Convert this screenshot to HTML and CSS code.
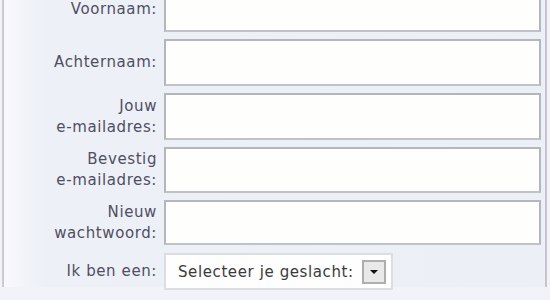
FILE: index.html
```html
<!DOCTYPE html>
<html>
    <head>
        <title>Registreren</title>
        <link rel="stylesheet" href="styles.css">
    </head>
    <body>
        <div class="frame">
            <form class="signup">
                <label class="lbl" for="voornaam">Voornaam:</label>
                <input class="field" id="voornaam" type="text">

                <label class="lbl" for="achternaam">Achternaam:</label>
                <input class="field" id="achternaam" type="text">

                <label class="lbl" for="email">Jouw<br>e-mailadres:</label>
                <input class="field" id="email" type="text">

                <label class="lbl" for="email2">Bevestig<br>e-mailadres:</label>
                <input class="field" id="email2" type="text">

                <label class="lbl" for="pass">Nieuw<br>wachtwoord:</label>
                <input class="field" id="pass" type="password">

                <label class="lbl" for="sex">Ik ben een:</label>
                <div class="select_box" id="sex">
                    <span class="select_text">Selecteer je geslacht:</span>
                    <span class="select_btn"><span class="arrow"></span></span>
                </div>
            </form>
        </div>
    </body>
</html>
```

FILE: styles.css
```css
html, body {
	margin: 0;
	height: 100%;
}
body {
	background: #f2f3f9;
	font-family: "DejaVu Sans", Verdana, sans-serif;
	overflow: hidden;
}
.frame {
	height: 100%;
	margin: 0 3px 0 2px;
	border-left: 2px solid #c9cbd3;
	border-right: 2px solid #c4c6ce;
	background: linear-gradient(to right, #f8f8fc 0, #eef0f8 40px, #edeff7 100%);
}
.signup {
	display: grid;
	grid-template-columns: 153px 377px;
	column-gap: 7px;
	row-gap: 7px;
	grid-template-rows: 45px 47px 47px 46px 45px 38px;
	margin-top: -13px;
}
.lbl {
	align-self: center;
	text-align: right;
	font-size: 15px;
	letter-spacing: 0.6px;
	line-height: 21px;
	color: #4e4f60;
}
.field {
	margin: 0;
	border: 2px solid #b4b6bd;
	border-bottom-color: #c0c2c8;
	background: #fefefc;
	font-size: 15px;
}
.select_box {
	box-sizing: border-box;
	width: 229px;
	margin-top: 1px;
	display: flex;
	align-items: center;
	justify-content: space-between;
	border: 2px solid #dcdde3;
	background: #fefefe;
	padding: 0 5px 0 12px;
}
.select_text {
	font-size: 15px;
	letter-spacing: 0.6px;
	color: #3a3a3a;
}
.select_btn {
	width: 20px;
	height: 20px;
	border: 2px solid #aeaeae;
	background: #e9e9e9;
	display: flex;
	align-items: center;
	justify-content: center;
}
.arrow {
	width: 0;
	height: 0;
	border-left: 4px solid transparent;
	border-right: 4px solid transparent;
	border-top: 4px solid #111;
}
```
